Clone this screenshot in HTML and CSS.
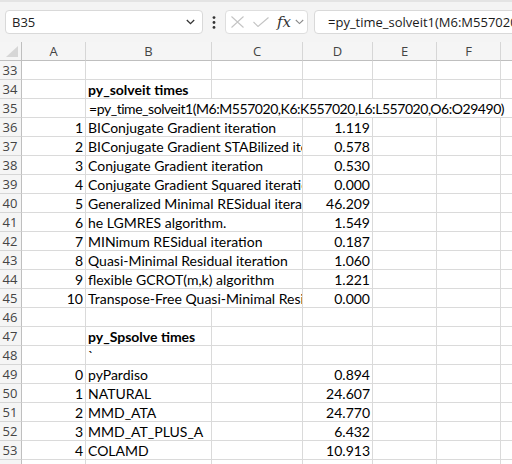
FILE: index.html
```html
<!DOCTYPE html>
<html>
<head>
<meta charset="utf-8">
<link rel="stylesheet" href="styles.css">
</head>
<body>
<div class="toolbar">
  <div class="namebox">
    <span class="nb-text">B35</span>
    <svg class="nb-chev" width="9" height="6" viewBox="0 0 9 6"><path d="M0.8 1 L4.5 4.6 L8.2 1" fill="none" stroke="#333" stroke-width="1.3"/></svg>
  </div>
  <div class="dots">
    <svg width="4" height="13" viewBox="0 0 4 13"><circle cx="2" cy="1.6" r="1.4" fill="#333"/><circle cx="2" cy="6.5" r="1.4" fill="#333"/><circle cx="2" cy="11.4" r="1.4" fill="#333"/></svg>
  </div>
  <div class="fxbox">
    <svg class="ic-x" width="13" height="12" viewBox="0 0 13 12"><path d="M0.5 0.5 L12.5 11.5 M12.5 0.5 L0.5 11.5" fill="none" stroke="#c4c4c4" stroke-width="1.1"/></svg>
    <svg class="ic-check" width="16" height="10" viewBox="0 0 16 10"><path d="M0.5 5 L5 9.5 L15.5 0.5" fill="none" stroke="#c4c4c4" stroke-width="1.1"/></svg>
    <span class="fx">fx</span>
    <svg class="ic-chev" width="9" height="6" viewBox="0 0 9 6"><path d="M0.8 1 L4.5 4.6 L8.2 1" fill="none" stroke="#8a8a8a" stroke-width="1.1"/></svg>
  </div>
  <div class="formula">=py_time_solveit1(M6:M557020,K6:K557020,L6:L557020,O6:O29490)</div>
</div>

<div class="sheet">
  <div class="ch corner"><svg width="12" height="11" viewBox="0 0 12 11"><polygon points="12,0 12,11 0,11" fill="#d6d6d6"/></svg></div>
  <div class="ch">A</div><div class="ch">B</div><div class="ch">C</div><div class="ch">D</div><div class="ch">E</div><div class="ch">F</div><div class="ch">G</div>

  <div class="rh">33</div><div class="c"></div><div class="c"></div><div class="c"></div><div class="c"></div><div class="c"></div><div class="c"></div><div class="c"></div>

  <div class="rh">34</div><div class="c"></div><div class="c b">py_solveit times</div><div class="c"></div><div class="c"></div><div class="c"></div><div class="c"></div><div class="c"></div>

  <div class="rh">35</div><div class="c"></div><div class="c s6 tight">=py_time_solveit1(M6:M557020,K6:K557020,L6:L557020,O6:O29490)</div>

  <div class="rh">36</div><div class="c n">1</div><div class="c s2">BIConjugate Gradient iteration</div><div class="c n">1.119</div><div class="c"></div><div class="c"></div><div class="c"></div>
  <div class="rh">37</div><div class="c n">2</div><div class="c s2">BIConjugate Gradient STABilized iteration</div><div class="c n">0.578</div><div class="c"></div><div class="c"></div><div class="c"></div>
  <div class="rh">38</div><div class="c n">3</div><div class="c s2">Conjugate Gradient iteration</div><div class="c n">0.530</div><div class="c"></div><div class="c"></div><div class="c"></div>
  <div class="rh">39</div><div class="c n">4</div><div class="c s2">Conjugate Gradient Squared iteration</div><div class="c n">0.000</div><div class="c"></div><div class="c"></div><div class="c"></div>
  <div class="rh">40</div><div class="c n">5</div><div class="c s2">Generalized Minimal RESidual iteration</div><div class="c n">46.209</div><div class="c"></div><div class="c"></div><div class="c"></div>
  <div class="rh">41</div><div class="c n">6</div><div class="c s2">he LGMRES algorithm.</div><div class="c n">1.549</div><div class="c"></div><div class="c"></div><div class="c"></div>
  <div class="rh">42</div><div class="c n">7</div><div class="c s2">MINimum RESidual iteration</div><div class="c n">0.187</div><div class="c"></div><div class="c"></div><div class="c"></div>
  <div class="rh">43</div><div class="c n">8</div><div class="c s2">Quasi-Minimal Residual iteration</div><div class="c n">1.060</div><div class="c"></div><div class="c"></div><div class="c"></div>
  <div class="rh">44</div><div class="c n">9</div><div class="c s2">flexible GCROT(m,k) algorithm</div><div class="c n">1.221</div><div class="c"></div><div class="c"></div><div class="c"></div>
  <div class="rh">45</div><div class="c n">10</div><div class="c s2">Transpose-Free Quasi-Minimal Residual iteration</div><div class="c n">0.000</div><div class="c"></div><div class="c"></div><div class="c"></div>

  <div class="rh">46</div><div class="c"></div><div class="c"></div><div class="c"></div><div class="c"></div><div class="c"></div><div class="c"></div><div class="c"></div>

  <div class="rh">47</div><div class="c"></div><div class="c b">py_Spsolve times</div><div class="c"></div><div class="c"></div><div class="c"></div><div class="c"></div><div class="c"></div>
  <div class="rh">48</div><div class="c"></div><div class="c">`</div><div class="c"></div><div class="c"></div><div class="c"></div><div class="c"></div><div class="c"></div>

  <div class="rh">49</div><div class="c n">0</div><div class="c">pyPardiso</div><div class="c"></div><div class="c n">0.894</div><div class="c"></div><div class="c"></div><div class="c"></div>
  <div class="rh">50</div><div class="c n">1</div><div class="c">NATURAL</div><div class="c"></div><div class="c n">24.607</div><div class="c"></div><div class="c"></div><div class="c"></div>
  <div class="rh">51</div><div class="c n">2</div><div class="c">MMD_ATA</div><div class="c"></div><div class="c n">24.770</div><div class="c"></div><div class="c"></div><div class="c"></div>
  <div class="rh">52</div><div class="c n">3</div><div class="c">MMD_AT_PLUS_A</div><div class="c"></div><div class="c n">6.432</div><div class="c"></div><div class="c"></div><div class="c"></div>
  <div class="rh">53</div><div class="c n">4</div><div class="c">COLAMD</div><div class="c"></div><div class="c n">10.913</div><div class="c"></div><div class="c"></div><div class="c"></div>

  <div class="rh">54</div><div class="c"></div><div class="c"></div><div class="c"></div><div class="c"></div><div class="c"></div><div class="c"></div><div class="c"></div>
</div>
</body>
</html>
```

FILE: styles.css
```css
* { box-sizing: border-box; }

html, body {
  margin: 0;
  padding: 0;
  width: 512px;
  height: 464px;
  overflow: hidden;
  background: #ffffff;
}

/* ---------- formula bar ---------- */
.toolbar {
  height: 42px;
  background: #f4f4f4;
  border-top: 2px solid #e4e4e4;
  display: flex;
  align-items: center;
  padding-left: 5px;
  overflow: hidden;
  font-family: "Open Sans", "Noto Sans", sans-serif;
}

.namebox {
  flex: none;
  width: 198px;
  height: 24px;
  background: #fff;
  border: 1px solid #d9d9d9;
  border-radius: 4px;
  display: flex;
  align-items: center;
  justify-content: space-between;
  padding: 0 7px 0 6px;
}

.nb-text {
  font-size: 13px;
  color: #222;
}

.nb-chev { display: block; }

.dots {
  flex: none;
  width: 22px;
  display: flex;
  justify-content: center;
}

.dots svg { display: block; }

.fxbox {
  flex: none;
  width: 83px;
  height: 24px;
  background: #fff;
  border: 1px solid #dedede;
  border-radius: 4px;
  display: flex;
  align-items: center;
  padding-left: 5px;
}

.fxbox svg { display: block; flex: none; }

.ic-check { margin-left: 9px; }

.fx {
  margin-left: 8px;
  font-family: "DejaVu Serif", "Liberation Serif", serif;
  font-style: italic;
  font-size: 15px;
  color: #333;
  line-height: 1;
}

.ic-chev { margin-left: 4px; }

.formula {
  flex: none;
  width: 240px;
  height: 24px;
  margin-left: 6px;
  background: #fff;
  border: 1px solid #d9d9d9;
  border-radius: 4px;
  padding-left: 13px;
  font-size: 13px;
  line-height: 22px;
  color: #1a1a1a;
  white-space: nowrap;
  overflow: hidden;
}

/* ---------- grid ---------- */
.sheet {
  display: grid;
  grid-template-columns: 22px 64px 126px 91px 70px 64px 64px 60px;
  grid-auto-rows: 19px;
}

.ch {
  background: #f5f5f5;
  border-right: 1px solid #d6d6d6;
  border-bottom: 1px solid #bfbfbf;
  font-family: "Open Sans", "Noto Sans", sans-serif;
  font-size: 13px;
  line-height: 18px;
  color: #444;
  text-align: center;
}

.corner {
  border-right: 1px solid #bfbfbf;
  display: flex;
  align-items: flex-end;
  justify-content: flex-end;
  padding: 0 3px 3px 0;
}

.corner svg { display: block; }

.rh {
  background: #f5f5f5;
  border-right: 1px solid #bfbfbf;
  border-bottom: 1px solid #d6d6d6;
  font-family: "Open Sans", "Noto Sans", sans-serif;
  font-size: 13px;
  line-height: 18px;
  color: #444;
  text-align: center;
  padding-right: 1px;
}

.c {
  border-right: 1px solid #dadada;
  border-bottom: 1px solid #dadada;
  font-family: Lato, "Liberation Sans", sans-serif;
  font-size: 14px;
  line-height: 19px;
  color: #000;
  white-space: nowrap;
  overflow: hidden;
  padding: 0 2px;
}

.n { text-align: right; }

.b { font-weight: bold; }

.s2 { grid-column: span 2; }

.s6 { grid-column: span 6; }

.tight {
  padding-left: 3px;
  letter-spacing: -0.45px;
}
```
